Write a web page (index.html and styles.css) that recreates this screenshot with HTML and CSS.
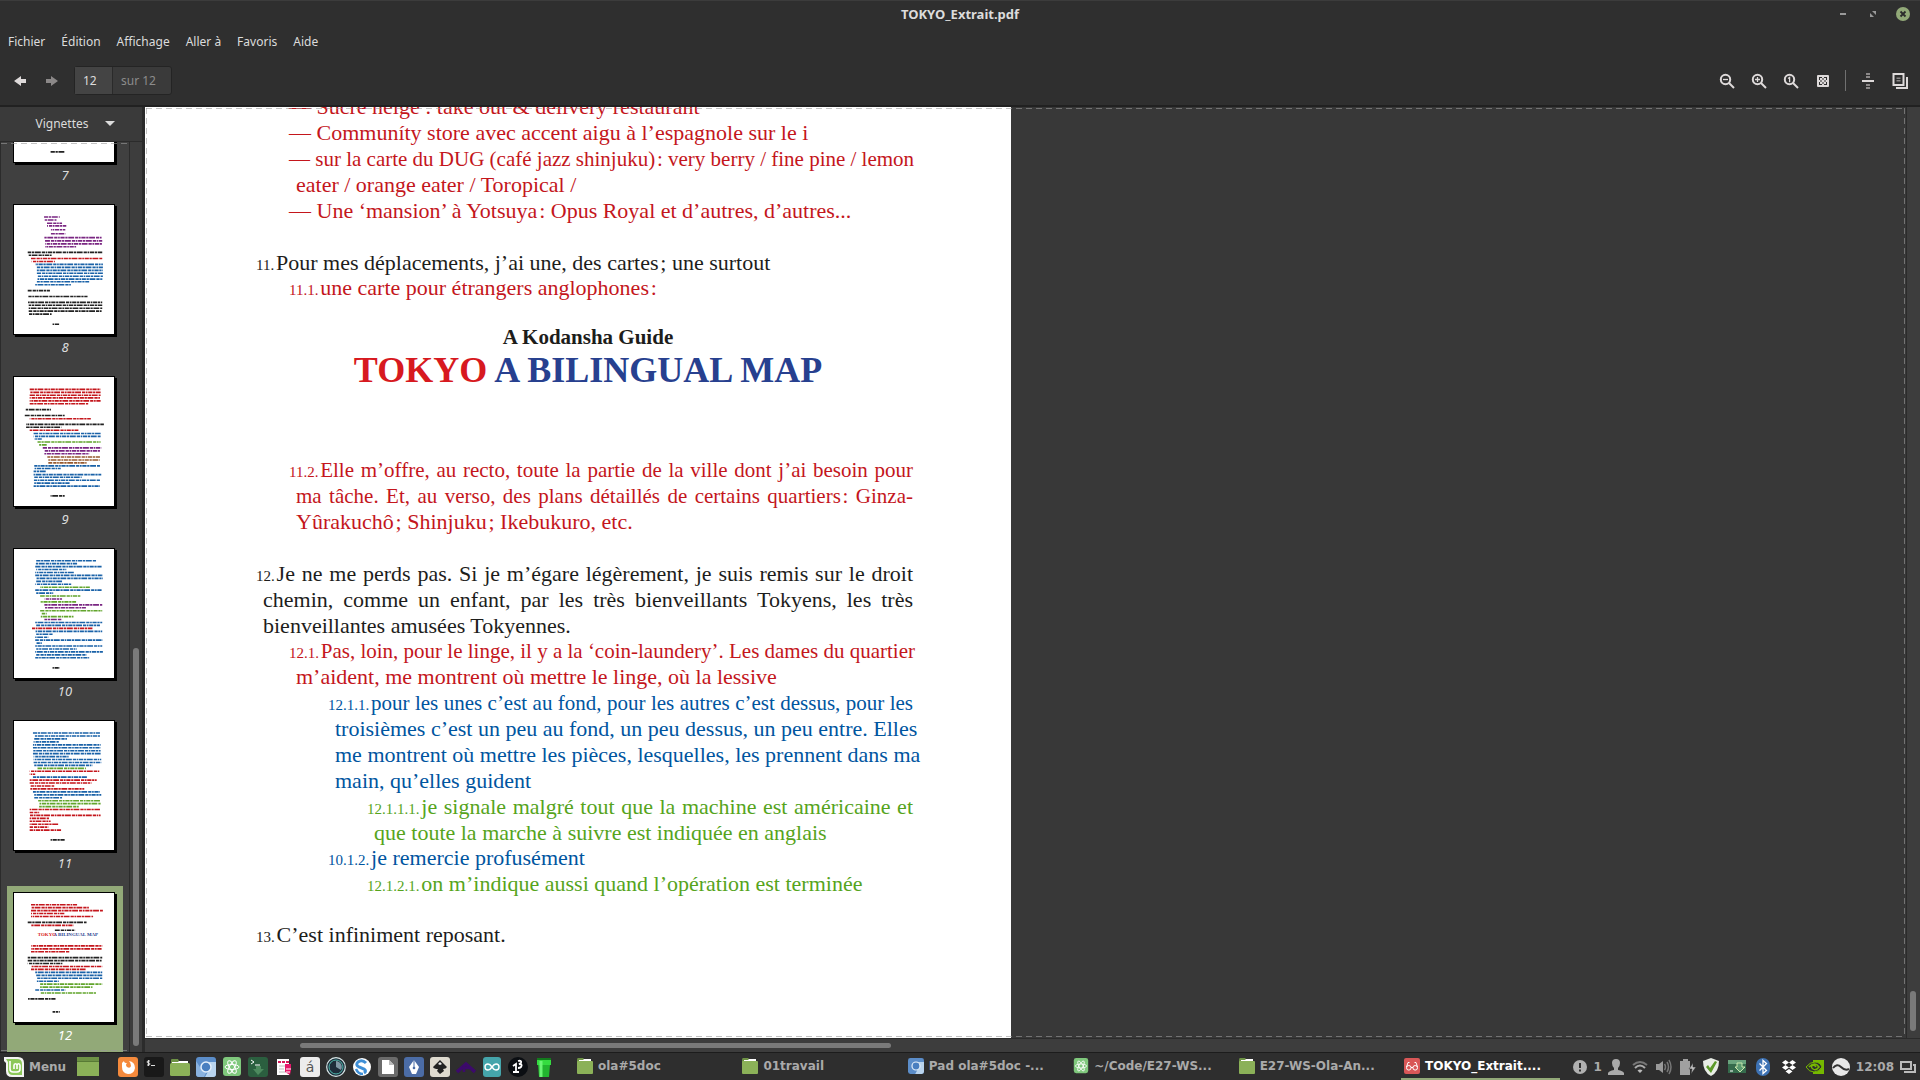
FILE: index.html
```html
<!DOCTYPE html>
<html lang="fr">
<head>
<meta charset="utf-8">
<title>TOKYO_Extrait.pdf</title>
<link rel="stylesheet" href="styles.css">
</head>
<body>
<div class="desktop">
  <header class="titlebar">
    <h1 class="window-title">TOKYO_Extrait.pdf</h1>
    <div class="window-buttons">
      <button type="button" aria-label="Réduire"><svg width="14" height="14" viewBox="0 0 14 14"><path d="M4 7h6" stroke="#999" stroke-width="2"/></svg></button>
      <button type="button" aria-label="Agrandir"><svg width="14" height="14" viewBox="0 0 14 14"><path d="M6 4h4v4zM4 6v4h4z" fill="#999"/></svg></button>
      <button type="button" aria-label="Fermer"><svg width="14" height="14" viewBox="0 0 14 14"><circle cx="7" cy="7" r="7" fill="#92a978"/><path d="M4.500 4.500l5 5M9.500 4.500l-5 5" stroke="#2b2b2b" stroke-width="1.800"/></svg></button>
    </div>
  </header>

  <nav class="menubar">
    <button type="button">Fichier</button>
    <button type="button">Édition</button>
    <button type="button">Affichage</button>
    <button type="button">Aller à</button>
    <button type="button">Favoris</button>
    <button type="button">Aide</button>
  </nav>

  <div class="toolbar">
    <button type="button" class="tool" aria-label="Page précédente"><svg width="16" height="16" viewBox="0 0 16 16"><path d="M2 8l7-5v3h5v4H9v3z" fill="#dedada"/></svg></button>
    <button type="button" class="tool" aria-label="Page suivante"><svg width="16" height="16" viewBox="0 0 16 16"><path d="M14 8L7 3v3H2v4h5v3z" fill="#8b8888"/></svg></button>
    <div class="pager">
      <input id="page" class="page-input" type="text" value="12">
      <label for="page" class="page-total">sur 12</label>
    </div>
    <div class="tools">
      <button type="button" class="tool" aria-label="Zoom arrière"><svg width="16" height="16" viewBox="0 0 16 16" fill="none" stroke="#dedada" stroke-width="2"><circle cx="6.500" cy="6.500" r="4.700"/><path d="M10 10l5 5"/><path d="M4 6.500h5" stroke-width="1.300"/></svg></button>
      <button type="button" class="tool" aria-label="Zoom avant"><svg width="16" height="16" viewBox="0 0 16 16" fill="none" stroke="#dedada" stroke-width="2"><circle cx="6.500" cy="6.500" r="4.700"/><path d="M10 10l5 5"/><path d="M4 6.500h5M6.500 4v5" stroke-width="1.300"/></svg></button>
      <button type="button" class="tool" aria-label="Taille réelle"><svg width="16" height="16" viewBox="0 0 16 16" fill="none" stroke="#dedada" stroke-width="2"><circle cx="6.500" cy="6.500" r="4.700"/><path d="M10 10l5 5"/><path d="M5 5.500l1.600-1V9.300" stroke-width="1.300"/></svg></button>
      <button type="button" class="tool" aria-label="Adapter à la page"><svg width="16" height="16" viewBox="0 0 16 16"><rect x="2" y="2" width="12" height="12" rx="1" fill="#dedada"/><path d="M4 4h3v1H5v2H4zM12 4H9v1h2v2h1zM4 12h3v-1H5V9H4zM12 12H9v-1h2V9h1zM5 7.500h2v1H5zM9 7.500h2v1H9zM7.500 5h1v2h-1zM7.500 9h1v2h-1z" fill="#2f2f2f"/></svg></button>
      <span class="tool-separator"></span>
      <button type="button" class="tool" aria-label="Continu"><svg width="16" height="16" viewBox="0 0 16 16"><path d="M2 7h12v2H2z" fill="#dedada"/><path d="M6 0h4v2H6zM6 3h4v2H6zM6 11h4v2H6zM6 14h4v2H6z" fill="#8b8888"/></svg></button>
      <button type="button" class="tool" aria-label="Double page"><svg width="16" height="16" viewBox="0 0 16 16"><path d="M1.500 1h10v11h-10z" fill="none" stroke="#dedada" stroke-width="2"/><path d="M4 15h11V4" fill="none" stroke="#dedada" stroke-width="2"/><path d="M4.500 4.500h4v1.500h-4zM4.500 7h4v1.500h-4z" fill="#8b8888"/></svg></button>
    </div>
  </div>

  <main class="viewer">
    <aside class="sidebar">
      <button type="button" class="sidebar-head">Vignettes
        <svg width="10" height="6" viewBox="0 0 10 6"><path d="M0 0h10L5 5z" fill="#dcdcdc"/></svg>
      </button>
      <div class="sidebar-body">
        <div class="thumbs" id="thumbs"></div>
        <div class="scroll scroll-side"><span class="thumb-bar"></span></div>
      </div>
    </aside>

    <section class="document">
      <div class="view">
        <article class="paper">
          <p class="l1"><span>— Sucre neige : take out &amp; delivery restaurant</span></p>
          <p class="l1"><span>— Communíty store avec accent aigu à l’espagnole sur le i</span></p>
          <p class="l1"><span class="full tight">— sur la carte du DUG (café jazz shinjuku)&#8202;: very berry / fine pine / lemon</span><span>eater / orange eater / Toropical /</span></p>
          <p class="l1"><span>— Une ‘mansion’ à Yotsuya&#8202;: Opus Royal et d’autres, d’autres...</span></p>

          <p class="l0 section"><span><small>11.</small>&#8202;Pour mes déplacements, j’ai une, des cartes&#8202;; une surtout</span></p>
          <p class="l1"><span><small>11.1.</small>&#8202;une carte pour étrangers anglophones&#8202;:</span></p>

          <div class="cover">
            <h3>A Kodansha Guide</h3>
            <h2><span class="red">TOKYO</span> A BILINGUAL MAP</h2>
          </div>

          <p class="l1"><span class="full tight"><small>11.2.</small>&#8202;Elle m’offre, au recto, toute la partie de la ville dont j’ai besoin pour</span><span class="full tight">ma tâche. Et, au verso, des plans détaillés de certains quartiers&#8202;: Ginza-</span><span>Yûrakuchô&#8202;; Shinjuku&#8202;; Ikebukuro, etc.</span></p>

          <p class="l0 section"><span class="full"><small>12.</small>&#8202;Je ne me perds pas. Si je m’égare légèrement, je suis remis sur le droit</span><span class="full">chemin, comme un enfant, par les très bienveillants Tokyens, les très</span><span>bienveillantes amusées Tokyennes.</span></p>
          <p class="l1"><span class="full tight"><small>12.1.</small>&#8202;Pas, loin, pour le linge, il y a la ‘coin-laundery’. Les dames du quartier</span><span>m’aident, me montrent où mettre le linge, où la lessive</span></p>
          <p class="l2"><span class="full tight"><small>12.1.1.</small>&#8202;pour les unes c’est au fond, pour les autres c’est dessus, pour les</span><span class="full">troisièmes c’est un peu au fond, un peu dessus, un peu entre. Elles</span><span class="full">me montrent où mettre les pièces, lesquelles, les prennent dans ma</span><span>main, qu’elles guident</span></p>
          <p class="l3"><span class="full"><small>12.1.1.1.</small>&#8202;je signale malgré tout que la machine est américaine et</span><span>que toute la marche à suivre est indiquée en anglais</span></p>
          <p class="l2"><span><small>10.1.2.</small>&#8202;je remercie profusément</span></p>
          <p class="l3"><span><small>12.1.2.1.</small>&#8202;on m’indique aussi quand l’opération est terminée</span></p>

          <p class="l0 section"><span><small>13.</small>&#8202;C’est infiniment reposant.</span></p>
        </article>
      </div>
      <div class="scroll scroll-v"><span class="thumb-bar"></span></div>
      <div class="scroll scroll-h"><span class="thumb-bar"></span></div>
    </section>
  </main>

  <footer class="panel">
    <button type="button" class="menu-button">
      <svg width="20" height="20" viewBox="0 0 20 20"><path d="M0 0h14q6 0 6 6v14H8q-6 0-6-6V6L0 4z" fill="#f4f4f4"/><path d="M2 2h11q5 0 5 5v11H9q-5 0-5-5V5z" fill="#8cc85a"/><path d="M6 4v8q0 3 3 3h4q3 0 3-3V8.500q0-1.700-1.500-1.700T13 8.500V12M13 8.500q0-1.700-1.500-1.700T10 8.500V12" fill="none" stroke="#fff" stroke-width="1.600"/></svg>
      Menu
    </button>
    <div class="launchers">
      <button type="button" class="show-desktop" aria-label="Afficher le bureau"><svg width="22" height="20" viewBox="0 0 22 20"><path d="M0 0h22v19H0z" fill="#8bb158"/><path d="M0 0h22v4H0z" fill="#6d9145"/><path d="M0 4.500h22" stroke="#587a35"/></svg></button>
      <button type="button" aria-label="Firefox"><svg width="20" height="20" viewBox="0 0 20 20"><rect width="20" height="20" rx="3" fill="#f58a3c"/><path d="M4 6q1-1 2-2 0 2 3 2-2 2 0 4 3 2 4-1 0-3-2-5 6 1 6 7-1 6-7 6-6-1-6-7z" fill="#fff"/></svg></button>
      <button type="button" aria-label="Terminal"><svg width="20" height="20" viewBox="0 0 20 20"><rect width="20" height="20" rx="3" fill="#191919"/><path d="M6 4H4.500Q3 4 3 5t1.500 1T6 7 4.500 8H3M4.500 3v6M7 8.500h4" fill="none" stroke="#ddd"/></svg></button>
      <button type="button" aria-label="Fichiers"><svg width="20" height="20" viewBox="0 0 20 20"><path d="M1 3q0-1 1-1h6l1 2h9v4H1z" fill="#6d9145"/><path d="M2 5h6l1-1h9v3H2z" fill="#fff"/><rect y="6" width="20" height="13" rx="1.500" fill="#8bb158"/></svg></button>
      <button type="button" aria-label="Chromium"><svg width="20" height="20" viewBox="0 0 20 20"><rect width="20" height="20" rx="3" fill="#5b8dc9"/><path d="M10 5h10v12q0 3-3 3H9l5-9z" fill="#b9d4ee"/><path d="M0 4l6 9q3 4 5 1l-3 6H3q-3 0-3-3z" fill="#8ab2de"/><circle cx="10" cy="10" r="5" fill="#4a7fc0" stroke="#e4effa" stroke-width="1.500"/></svg></button>
      <button type="button" aria-label="Atom"><svg width="20" height="20" viewBox="0 0 20 20"><rect x="1" width="18" height="19" rx="3" fill="#7fc87c"/><g fill="none" stroke="#fff"><ellipse cx="10" cy="10" rx="7" ry="2.500"/><ellipse cx="10" cy="10" rx="7" ry="2.500" transform="rotate(60 10 10)"/><ellipse cx="10" cy="10" rx="7" ry="2.500" transform="rotate(120 10 10)"/></g></svg></button>
      <button type="button" aria-label="Guake"><svg width="20" height="20" viewBox="0 0 20 20"><rect width="20" height="20" rx="3" fill="#2b5f3f"/><path d="M3 3l3 2-3 2M7 8h5" fill="none" stroke="#fff"/><path d="M8 9h5v3h3l-6 6-5-6h3z" fill="#4d8a5e"/></svg></button>
      <button type="button" aria-label="Document"><svg width="20" height="20" viewBox="0 0 20 20"><path d="M3 2h12v16H3z" fill="#fff"/><path d="M4 5h3M8 5h3M12 5h3" stroke="#d8185c" stroke-width="2"/><path d="M5 9h6M5 12h5M5 15h6" stroke="#bbb"/><path d="M11 7h6v6l-1 5-5-3z" fill="#e6186a"/><path d="M12 12h5M12 15h4" stroke="#fff"/></svg></button>
      <button type="button" class="char-icon" aria-label="Caractères">á</button>
      <button type="button" aria-label="Horloge"><svg width="20" height="20" viewBox="0 0 20 20"><circle cx="10" cy="10" r="9.300" fill="#1e2c3a" stroke="#d6e6e6" stroke-width="1.200"/><circle cx="10" cy="10" r="7" fill="none" stroke="#4fb8ac"/><path d="M10 10V4a6 6 0 015 9z" fill="#8097a5"/></svg></button>
      <button type="button" aria-label="Simplenote"><svg width="20" height="20" viewBox="0 0 20 20"><circle cx="10" cy="10" r="9" fill="#fff"/><path d="M14 6q-4-4-8-1-3 3 1 5l5 2q3 2 0 4" fill="none" stroke="#3f8fd6" stroke-width="3"/><path d="M4 12q2 5 7 5" fill="none" stroke="#3f8fd6" stroke-width="2.500"/></svg></button>
      <button type="button" aria-label="LibreOffice"><svg width="20" height="20" viewBox="0 0 20 20"><rect width="20" height="20" rx="3" fill="#6b6b6b"/><path d="M4 3h7l5 5v9H4z" fill="#fff"/><path d="M11 3v5h5z" fill="#bbb"/></svg></button>
      <button type="button" aria-label="Fontforge"><svg width="20" height="20" viewBox="0 0 20 20"><rect width="20" height="20" rx="3" fill="#4b6ca6"/><path d="M10 3l5 7-3 7H8l-3-7z" fill="#fff"/><path d="M10 3v8" stroke="#4b6ca6"/><circle cx="10" cy="11" r="1.300" fill="#4b6ca6"/></svg></button>
      <button type="button" aria-label="Inkscape"><svg width="20" height="20" viewBox="0 0 20 20"><rect width="20" height="20" rx="3" fill="#dedacf"/><path d="M10 3l7 7q-1 2-4 2l1 2-4 3-3-3 1-2q-4 0-5-2z" fill="#222"/><path d="M10 5l2 2-2 1-2-1z" fill="#eee"/></svg></button>
      <button type="button" aria-label="Fritzing"><svg width="20" height="20" viewBox="0 0 20 20"><path d="M1 15l9-8 9 8" fill="none" stroke="#3c0a6b" stroke-width="3.500"/><path d="M8 15v-4h5" fill="none" stroke="#3c0a6b" stroke-width="2.500"/></svg></button>
      <button type="button" aria-label="Arduino"><svg width="20" height="20" viewBox="0 0 20 20"><rect x="1" width="18" height="20" rx="3" fill="#45a5ab"/><path d="M10 10C8 7 7 7 6 7a3 3 0 000 6c1 0 2 0 4-3s3-3 4-3a3 3 0 010 6c-1 0-2 0-4-3z" fill="none" stroke="#fff" stroke-width="1.400"/></svg></button>
      <button type="button" aria-label="Processing"><svg width="20" height="20" viewBox="0 0 20 20"><circle cx="10" cy="10" r="10" fill="#0b0e12"/><path d="M5 9l3-2v8M5 15h6M10 4q4-1 3 2l-2 1q4 0 2 3-1 1-3 1" fill="none" stroke="#fff" stroke-width="1.800"/></svg></button>
      <button type="button" aria-label="Tuyau"><svg width="20" height="20" viewBox="0 0 20 20"><path d="M4 8h12l-1 12H5z" fill="#22b52f"/><path d="M3 1h14v7H3z" fill="#35dc40"/><path d="M3 1h14v2H3z" fill="#127a1c"/><path d="M7 4v16" stroke="#6bf574" stroke-width="3"/></svg></button>
    </div>

    <div class="tasks">
      <button type="button" class="task"><svg width="16" height="18" viewBox="0 0 16 18"><path d="M0 3q0-2 1-2h5l1 1h7v5H0z" fill="#6d9145"/><path d="M2 3h4l1-1h7v2H2z" fill="#fff"/><rect y="4" width="16" height="13" rx="1" fill="#8bb158"/></svg><span>ola#5doc</span></button>
      <button type="button" class="task"><svg width="16" height="18" viewBox="0 0 16 18"><path d="M0 3q0-2 1-2h5l1 1h7v5H0z" fill="#6d9145"/><path d="M2 3h4l1-1h7v2H2z" fill="#fff"/><rect y="4" width="16" height="13" rx="1" fill="#8bb158"/></svg><span>01travail</span></button>
      <button type="button" class="task"><svg width="16" height="16" viewBox="0 0 20 20"><rect width="20" height="20" rx="3" fill="#5b8dc9"/><path d="M10 5h10v12q0 3-3 3H9l5-9z" fill="#b9d4ee"/><circle cx="10" cy="10" r="5" fill="#4a7fc0" stroke="#e4effa" stroke-width="1.500"/></svg><span>Pad ola#5doc -...</span></button>
      <button type="button" class="task"><svg width="16" height="16" viewBox="0 0 20 20"><rect x="1" width="18" height="19" rx="3" fill="#7fc87c"/><g fill="none" stroke="#fff"><ellipse cx="10" cy="10" rx="7" ry="2.500"/><ellipse cx="10" cy="10" rx="7" ry="2.500" transform="rotate(60 10 10)"/><ellipse cx="10" cy="10" rx="7" ry="2.500" transform="rotate(120 10 10)"/></g></svg><span>~/Code/E27-WS...</span></button>
      <button type="button" class="task"><svg width="16" height="18" viewBox="0 0 16 18"><path d="M0 3q0-2 1-2h5l1 1h7v5H0z" fill="#6d9145"/><path d="M2 3h4l1-1h7v2H2z" fill="#fff"/><rect y="4" width="16" height="13" rx="1" fill="#8bb158"/></svg><span>E27-WS-Ola-An...</span></button>
      <button type="button" class="task active"><svg width="16" height="16" viewBox="0 0 16 16"><rect width="16" height="16" rx="2" fill="#d95757"/><path d="M2.500 9L4 4.500h1.500M13.500 9L12 4.500h-1.500M7 9.500h2" fill="none" stroke="#fff"/><circle cx="4.800" cy="9.800" r="2.300" fill="none" stroke="#fff"/><circle cx="11.200" cy="9.800" r="2.300" fill="none" stroke="#fff"/></svg><span>TOKYO_Extrait....</span></button>
    </div>

    <div class="tray">
      <span class="notice"><svg width="14" height="14" viewBox="0 0 14 14"><circle cx="7" cy="7" r="7" fill="#b0b0b0"/><path d="M7 3v5M7 9.500v2" stroke="#2e2e2e" stroke-width="2"/></svg>1</span>
      <div class="tray-icons small">
        <svg viewBox="0 0 16 16"><path d="M8 0q4 0 4 4 0 3-2 5v2q5 1 6 3v2H0v-2q1-2 6-3V9Q4 7 4 4q0-4 4-4z" fill="#aaa"/></svg>
        <svg viewBox="0 0 16 16" fill="none" stroke-width="2"><path d="M1 6q7-6 14 0" stroke="#777"/><path d="M3 9q5-5 10 0" stroke="#aaa"/><path d="M5.500 11.500q2.500-2 5 0L8 14z" fill="#bbb"/></svg>
        <svg viewBox="0 0 16 16"><path d="M0 5h3l4-3v12l-4-3H0z" fill="#999"/><path d="M8.500 5q2 3 0 6M11 3q3 5 0 10M13 1q4 7 0 14" fill="none" stroke="#777" stroke-width="1.500"/></svg>
        <svg viewBox="0 0 16 16"><path d="M3 0h5v2h2v14H0V2h3z" fill="#a0a0a0"/><path d="M13 4l-4 6h3l-1 5 5-7h-3z" fill="#bbb" stroke="#2e2e2e" stroke-width=".5"/></svg>
      </div>
      <div class="tray-icons">
        <svg viewBox="0 0 18 18"><path d="M9 0l8 3q0 11-8 15Q1 14 1 3z" fill="#e8ede5"/><path d="M4 9l2-2 2 3 5-7 2 1-6 11z" fill="#5b9a28"/></svg>
        <svg viewBox="0 0 18 18"><path d="M0 2h18v13H0z" fill="#356b4c"/><path d="M0 2h18v4H0z" fill="#6aa47e"/><path d="M9 5h5v4h3l-5 5-5-5h2z" fill="#5b9a70" stroke="#c9e8ad"/><path d="M2 13h3" stroke="#fff"/></svg>
        <svg viewBox="0 0 18 18"><rect x="2" width="14" height="18" rx="7" fill="#3d72b4"/><path d="M5.500 5.500l7 7L9 15.500v-13l3.500 3-7 7" fill="none" stroke="#fff" stroke-width="1.300"/></svg>
        <svg viewBox="0 0 18 18"><path d="M5.500 2L9 4.500 5.500 7 2 4.500zM12.500 2L16 4.500 12.500 7 9 4.500zM5.500 7L9 9.500 5.500 12 2 9.500zM12.500 7L16 9.500 12.500 12 9 9.500zM9 11l3.500 2.500L9 16l-3.500-2.500z" fill="#fff"/></svg>
        <svg viewBox="0 0 18 18"><path d="M7 2h11v14H7z" fill="#76b900"/><path d="M0 9q4-5 9-5t7 5q-3 5-8 5T0 9z" fill="#2e2e2e" stroke="#76b900"/><path d="M3 9q6-6 10 0-3 4-6 2t0-4q2 0 3 2" fill="none" stroke="#76b900" stroke-width="1.500"/></svg>
        <svg viewBox="0 0 18 18"><circle cx="9" cy="9" r="9" fill="#e8e8e8"/><path d="M1 10q4-5 8-1t8 2" fill="none" stroke="#333" stroke-width="2"/></svg>
      </div>
      <time>12:08</time>
      <svg width="16" height="14" viewBox="0 0 16 14" fill="none" stroke="#bbb" stroke-width="2"><path d="M1 2h10v7H1z"/><path d="M13 5h2v7H5v-1"/></svg>
    </div>
  </footer>
</div>
<script src="thumbs.js"></script>
</body>
</html>
```
FILE: styles.css
```css
* { box-sizing: border-box; }

body {
  margin: 0;
  background: #2f2f2f;
  color: #dcdcdc;
  font: 12px/20px "Noto Sans", sans-serif;
}

button {
  margin: 0;
  padding: 0;
  border: 0;
  background: none;
  color: inherit;
  font: inherit;
}

svg { display: block; flex: none; }

.desktop {
  display: flex;
  flex-direction: column;
  height: 100vh;
  overflow: hidden;
}

/* Window frame */
.titlebar {
  display: grid;
  grid-template-columns: 1fr auto 1fr;
  align-items: center;
  flex: none;
  height: 28px;
  padding-bottom: 2px;
  border-top: 1px solid #3c3c3c;
}
.window-title {
  grid-column: 2;
  margin: 0;
  font-size: 13px;
  font-weight: 700;
}
.window-buttons {
  display: flex;
  justify-content: flex-end;
  gap: 16px;
  padding-right: 10px;
}

.menubar {
  display: flex;
  flex: none;
  height: 28px;
}
.menubar button { padding: 0 8px; }

.toolbar {
  display: flex;
  align-items: center;
  flex: none;
  gap: 16px;
  height: 51px;
  padding: 0 12px;
  border-bottom: 2px solid #212121;
}
.pager {
  display: flex;
  width: 98px;
  height: 29px;
  margin-left: -2px;
  border: 1px solid #242424;
  border-radius: 3px;
  background: #3a3a3a;
}
.page-input {
  width: 38px;
  padding: 0 8px;
  border: 0;
  border-right: 1px solid #2a2a2a;
  background: #444;
  color: #dcdcdc;
  font: inherit;
}
.page-total {
  padding: 4px 8px;
  color: #8c8c8c;
}
.tools {
  display: flex;
  align-items: center;
  gap: 16px;
  margin-left: auto;
}
.tool-separator {
  width: 1px;
  height: 21px;
  margin: 0 -2px;
  background: #707070;
}

/* Viewer */
.viewer {
  display: flex;
  flex: 1;
  min-height: 0;
}
.sidebar {
  display: flex;
  flex-direction: column;
  flex: none;
  width: 145px;
  border-right: 3px solid #2b2b2b;
  background: #404040;
}
.sidebar-head {
  display: flex;
  align-items: center;
  justify-content: center;
  gap: 16px;
  flex: none;
  height: 35px;
  padding-left: 8px;
  border-bottom: 1px solid #2b2b2b;
  background: #3a3a3a;
}
.sidebar-body {
  display: flex;
  flex: 1;
  min-height: 0;
}
.thumbs {
  position: relative;
  display: flex;
  flex: 1;
  flex-direction: column;
  justify-content: flex-end;
  overflow: hidden;
  padding: 0 6px;
  border-left: 1px solid #2b2b2b;
}
.thumb {
  display: flex;
  flex: none;
  flex-direction: column;
  align-items: flex-start;
  gap: 2px;
  height: 172px;
  padding: 6px 6px 0;
  font-size: 13px;
  font-style: italic;
}
.thumb span { align-self: center; }
.thumb.selected {
  height: 166px;
  background: #92a978;
  color: #fff;
}
.mini {
  border: 1px solid #000;
  background: #fff;
  box-shadow: 2px 2px #000;
}
.mini-title {
  font: 700 15px "Liberation Serif", serif;
}

.thumbs::before,
.thumbs::after,
.view::before {
  content: "";
  position: absolute;
  right: 0;
  left: 0;
  z-index: 1;
  height: 1px;
  background: repeating-linear-gradient(90deg, #9a9a9a99 0 6px, transparent 6px 10px);
}
.thumbs::before { top: 1px; }
.thumbs::after { bottom: 1px; }

.scroll { display: flex; background: #3d3d3d; }
.thumb-bar { border-radius: 3px; background: #7a7a7a; }
.scroll-side {
  align-items: flex-end;
  width: 13px;
  padding: 0 3px 6px;
  border-left: 1px solid #2b2b2b;
}
.scroll-side .thumb-bar { width: 100%; height: 44%; }

.document {
  display: grid;
  flex: 1;
  grid-template: minmax(0, 1fr) 14px / minmax(0, 1fr) 14px;
  min-width: 0;
}
.view {
  position: relative;
  display: flex;
  overflow: hidden;
  background: #383838;
}
.view::before {
  top: 1px;
  right: 1px;
  bottom: 1px;
  left: 1px;
  height: auto;
  background:
    repeating-linear-gradient(90deg, #9a9a9a99 0 6px, transparent 6px 10px) top / 100% 1px no-repeat,
    repeating-linear-gradient(90deg, #9a9a9a99 0 6px, transparent 6px 10px) bottom / 100% 1px no-repeat,
    repeating-linear-gradient(#9a9a9a99 0 6px, transparent 6px 10px) left / 1px 100% no-repeat,
    repeating-linear-gradient(#9a9a9a99 0 6px, transparent 6px 10px) right / 1px 100% no-repeat;
}
.scroll-v {
  align-items: flex-end;
  padding: 0 4px 7px 3px;
  border-left: 1px solid #2b2b2b;
}
.scroll-v .thumb-bar { width: 100%; height: 40px; }
.scroll-h {
  grid-column: 1 / -1;
  padding: 4px 0 4px 155px;
  border-top: 1px solid #2b2b2b;
}
.scroll-h .thumb-bar { width: 36.5%; }

/* PDF page */
.paper {
  flex: none;
  width: 866px;
  margin-top: -13px;
  padding: 0 98px 0 118px;
  background: #fff;
  color: #1d1d1b;
  font: 22px/26px "Liberation Serif", serif;
}
.paper p {
  margin: 0;
  text-indent: -7px;
}
.paper p span {
  display: block;
  height: 26px;
  white-space: nowrap;
}
.paper p span + span { text-indent: 0; }
.paper .full {
  text-align: justify;
  text-align-last: justify;
}
.paper .tight { font-size: 21px; }
.paper small { font-size: 15px; line-height: 20px; }
.paper .section { margin-top: 26px; }
.paper .l0 { margin-bottom: -1px; }
.paper .l1 { margin-left: 33px; color: #c4161c; }
.paper .l2 { margin-left: 72px; color: #00559f; }
.paper .l3 { margin-left: 111px; margin-bottom: -1px; color: #56a41c; }
.cover {
  padding: 23px 0 67px;
  text-align: center;
}
.cover h3 {
  margin: 0;
  font-size: 21px;
  line-height: 26px;
}
.cover h2 {
  margin: 0;
  color: #27408f;
  font-size: 36px;
  line-height: 40px;
  white-space: nowrap;
}
.cover .red { color: #d71920; }

/* Desktop panel */
.panel {
  display: flex;
  align-items: center;
  flex: none;
  height: 28px;
  padding-left: 4px;
  border-top: 1px solid #1c1c1c;
  background: #2e2e2e;
  color: #aaa;
  font: 700 12px/16px "DejaVu Sans", sans-serif;
}
.menu-button {
  display: flex;
  align-items: center;
  gap: 5px;
  width: 73px;
}
.launchers {
  display: flex;
  flex: none;
  gap: 6px;
  margin-right: 20px;
}
.show-desktop { margin-right: 13px; }
.char-icon {
  width: 20px;
  height: 20px;
  border-radius: 3px;
  background: #ececec;
  color: #555;
  font-weight: 400;
  font-size: 14px;
}
.tasks {
  display: flex;
  flex: 1;
  align-self: stretch;
  gap: 6px;
  min-width: 0;
}
.task {
  display: flex;
  align-items: center;
  flex: 1;
  gap: 5px;
  min-width: 0;
  padding: 0 3px;
  border-bottom: 2px solid transparent;
  white-space: nowrap;
}
.task.active {
  border-color: #92a978;
  color: #fff;
}
.tray {
  display: flex;
  align-items: center;
  flex: none;
  gap: 6px;
  padding: 0 4px 0 13px;
}
.notice {
  display: flex;
  gap: 6px;
  align-items: center;
}
.tray-icons { display: flex; gap: 8px; }
.tray-icons svg { width: 18px; height: 18px; }
.tray-icons.small svg { width: 16px; height: 16px; }
```
FILE: thumbs.js
```js
// Colour key, left, right and baseline of each text line on the miniature pages.
const colors = { k: "#222", r: "#c4161c", b: "#1a62a8", g: "#62a52c", p: "#7a2682", n: "#96592f" };
const pages = {
  7: "k112,155,363",
  8: "p92,140,36 p92,130,45 p101,147,55 p101,160,63 p113,157,75 p113,158,87 p92,270,99 p95,270,109 p95,270,118 p95,190,127 k42,270,144 k45,115,153 r52,270,163 r54,125,172 b65,272,181 b70,272,190 b70,272,199 b70,272,208 b70,272,217 b70,272,226 b70,230,234 b65,175,243 k42,110,261 k42,225,279 k42,270,297 k45,270,306 k45,270,315 k45,270,324 k45,115,333 k118,140,364",
  9: "r48,265,37 r48,265,46 r48,265,55 r48,265,63 r48,265,72 r48,227,81 k35,113,99 k33,155,117 r48,235,127 k37,275,144 k37,145,153 r48,197,162 b60,265,172 b60,265,181 b62,87,189 g72,265,198 g77,100,207 p88,267,216 p91,265,225 p91,230,234 n102,263,244 n105,263,253 n105,222,262 b60,263,271 b62,143,279 b60,100,288 b60,267,298 b62,207,306 b60,265,315 b62,170,324 b60,263,333 k112,155,363",
  10: "b68,252,35 b65,195,44 b65,268,53 b68,160,62 b65,185,71 b65,272,80 b68,272,89 b68,148,98 b65,177,107 g80,233,116 b65,268,125 b68,120,134 g80,205,143 p93,147,152 g80,190,161 p93,270,170 p95,222,179 g80,270,188 g82,100,197 g80,182,206 p93,147,215 b65,270,224 b68,263,233 r53,240,242 b65,270,251 b68,120,260 b65,105,269 b65,272,278 b68,85,287 b65,270,296 b68,192,305 b65,272,314 b68,222,323 b65,230,332 k118,140,363",
  11: "b58,265,36 b62,265,45 b62,162,54 b60,137,63 b58,265,72 b58,265,81 b58,265,90 b58,265,99 b60,167,108 b60,267,117 b60,267,126 b62,240,135 g72,220,144 r48,263,153 r48,65,162 b58,223,171 r48,253,180 r48,237,189 r48,123,198 r48,215,207 b58,263,216 b62,267,225 b62,147,234 g72,263,243 g77,265,252 g77,200,261 r48,263,270 r48,77,279 r48,265,288 r48,107,297 r48,112,306 r48,138,315 r48,105,324 r48,145,333 k112,155,363",
  12: "r52,195,35 r52,230,44 r52,272,53 r52,155,62 r52,242,71 k42,222,89 r52,182,98 k125,187,113 r52,270,161 r52,270,170 r52,170,179 k42,270,197 k42,270,206 k42,148,215 r52,270,224 r52,222,233 b65,270,242 b68,270,251 b68,270,260 b68,137,269 g80,270,278 g80,240,287 b65,157,296 g80,252,305 k42,127,323 k118,140,363"
};

const list = document.getElementById("thumbs");
for (const [number, data] of Object.entries(pages)) {
  const lines = data.split(" ").map((item, i) => {
    const [x1, x2, y] = item.slice(1).split(",");
    return `<path d="M${x1} ${y}H${x2}" stroke="${colors[item[0]]}" stroke-dashoffset="${i * 13}"/>`;
  }).join("");
  const title = number === "12"
    ? '<text class="mini-title" x="73" y="131" fill="#d71920">TOKYO</text><text class="mini-title" x="121" y="131" fill="#27408f">A BILINGUAL MAP</text>'
    : "";
  const button = document.createElement("button");
  button.type = "button";
  button.className = number === "12" ? "thumb selected" : "thumb";
  button.innerHTML = `<svg class="mini" width="102" height="131" viewBox="0 0 306 393" aria-hidden="true"><g stroke-width="5" stroke-dasharray="13 2 7 2 18 3 10 2 5 2">${lines}</g>${title}</svg><span>${number}</span>`;
  list.append(button);
}
```
